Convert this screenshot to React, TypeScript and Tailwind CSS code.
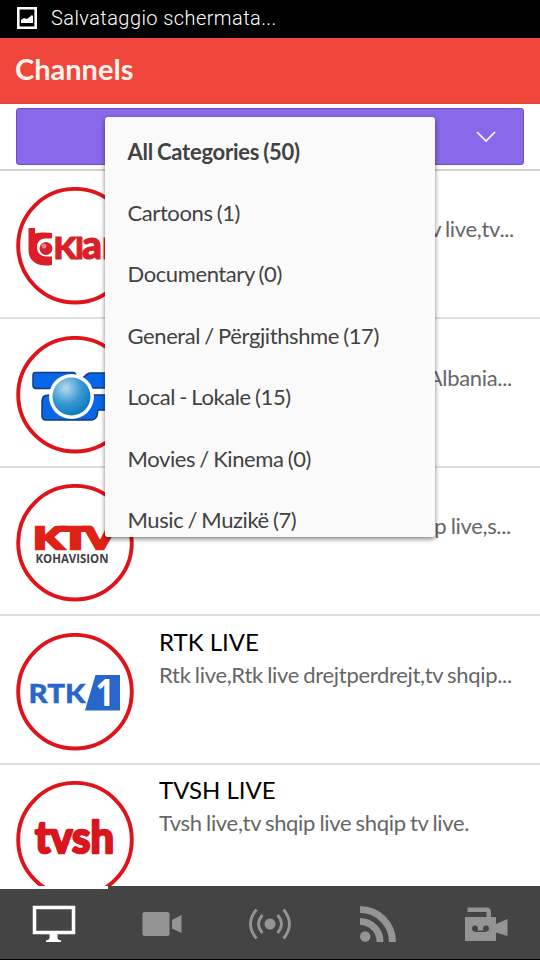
import React from "react";

const lato = "font-['Lato','Liberation_Sans',sans-serif]";

function Ring({ children }: { children: React.ReactNode }) {
  return (
    <svg className="ml-4 mt-[16.5px] h-[118px] w-[118px] shrink-0" viewBox="0 0 118 118">
      <circle cx="59" cy="58.700" r="56.8" fill="#fff" stroke="#df141b" strokeWidth="3.9" />
      {children}
    </svg>
  );
}

function KlanLogo() {
  return (
    <Ring>
      <path d="M12.500 41h6.500v5.500c6-1.500 11-1.300 17-.5v5.500h-7c-5 0-8 4-8 8.500 0 6 4 9.500 9 9.500h6V78c-6 1-13 1-18-3-4-3-5.500-7-5.500-13Z" fill="#da1f28" />
      <circle cx="30" cy="61.500" r="6.500" fill="#d4232c" />
      <circle cx="28" cy="59" r="2.500" fill="#ea7f83" />
      <g fill="#da1f28" stroke="#da1f28" strokeWidth="1.200" fontWeight="900" className={lato}>
        <text x="37.500" y="72" fontSize="30" textLength="23" lengthAdjust="spacingAndGlyphs">K</text>
        <text x="59" y="72" fontSize="30" textLength="9" lengthAdjust="spacingAndGlyphs">I</text>
        <text x="66" y="72" fontSize="40" textLength="42" lengthAdjust="spacingAndGlyphs">an</text>
      </g>
    </Ring>
  );
}

function GlobeLogo() {
  return (
    <Ring>
      <g fill="#0867e8" stroke="#153b73" strokeWidth="1.500" strokeLinejoin="round">
        <path d="M19 36.500h38q3 0 3 4l-14 2q-8 2-10 10H20q-3 0-3-3V39.500q0-3 2-3Z" />
        <path d="M67 42q4-5 8-5h26v15H74q-2-5-7-10Z" />
        <path d="M27 61q2-2 7-2l3 9q5 10 16 13l8-1q11-4 15-14l1-7h24v10q0 5-5 5H82l-1 6q-2 4-6 4H30q-4 0-4-4V65Z" />
      </g>
      <circle cx="55.500" cy="60.500" r="22.500" fill="#fff" />
      <circle cx="55.500" cy="60.500" r="19" fill="url(#globe)" />
      <defs>
        <radialGradient id="globe" cx=".35" cy=".28" r=".8">
          <stop offset="0" stopColor="#b8d9ee" />
          <stop offset=".5" stopColor="#3b9bd3" />
          <stop offset="1" stopColor="#0873b9" />
        </radialGradient>
      </defs>
    </Ring>
  );
}

function KtvLogo() {
  return (
    <Ring>
      <g fontSize="31" fontWeight="900" fill="#df2218" stroke="#df2218" strokeWidth="2.600" className={lato}>
        <text x="17.500" y="65" textLength="30" lengthAdjust="spacingAndGlyphs">K</text>
        <text x="45" y="65" textLength="29" lengthAdjust="spacingAndGlyphs">T</text>
        <text x="69" y="65" textLength="30" lengthAdjust="spacingAndGlyphs">V</text>
      </g>
      <text x="19.500" y="79" fontSize="12" fontWeight="700" textLength="73" lengthAdjust="spacingAndGlyphs" fill="#424047" className="font-['Open_Sans','Liberation_Sans',sans-serif]">KOHAVISION</text>
    </Ring>
  );
}

function RtkLogo() {
  return (
    <Ring>
      <text x="12.500" y="69.500" fontSize="27" fontWeight="900" textLength="57" lengthAdjust="spacingAndGlyphs" fill="#2866ca" stroke="#2866ca" strokeWidth=".4" className={lato}>RTK</text>
      <path d="M79.500 42H104v35.500H69Z" fill="#2866ca" />
      <text x="79.500" y="73" fontSize="37" fontWeight="700" textLength="19" lengthAdjust="spacingAndGlyphs" fill="#fff" className="font-['Open_Sans','Liberation_Sans',sans-serif]">1</text>
    </Ring>
  );
}

function TvshLogo() {
  return (
    <Ring>
      <text x="19" y="72" fontSize="43" fontWeight="700" textLength="79" lengthAdjust="spacingAndGlyphs" fill="#d9161d" stroke="#d9161d" strokeWidth="2.600" strokeLinejoin="round" className={lato}>tvsh</text>
    </Ring>
  );
}

type Channel = { id: string; title?: string; text: string; logo: React.ReactNode; style?: string };

const channels: Channel[] = [
  { id: "klan", text: "v live,tv...", logo: <KlanLogo />, style: "mr-[26px] justify-end" },
  { id: "top", text: "Albania...", logo: <GlobeLogo />, style: "mr-[28px] justify-end" },
  { id: "ktv", text: "ip live,s...", logo: <KtvLogo />, style: "mr-[29px] justify-end" },
  { id: "rtk", title: "RTK LIVE", text: "Rtk live,Rtk live drejtperdrejt,tv shqip...", logo: <RtkLogo /> },
  { id: "tvsh", title: "TVSH LIVE", text: "Tvsh live,tv shqip live shqip tv live.", logo: <TvshLogo /> },
];

const categories = [
  "All Categories (50)",
  "Cartoons (1)",
  "Documentary (0)",
  "General / Përgjithshme (17)",
  "Local - Lokale (15)",
  "Movies / Kinema (0)",
  "Music / Muzikë (7)",
];

function TabBar() {
  return (
    <nav className="relative grid h-[74px] shrink-0 grid-cols-5 border-b border-black bg-[#444444] text-[#949494]">
      <div className="absolute left-0 top-0 h-[3px] w-[108px] bg-white" />
      <svg viewBox="0 0 108 74" className="h-[74px] w-[108px]">
        <path d="M34.500 21.500h39v25h-39Z" fill="none" stroke="#fff" strokeWidth="3.500" />
        <path d="M49.500 48h8v4q0 1.500 3.500 2.500V56H46v-1.500q3.500-1 3.500-2.500Z" fill="#fff" />
      </svg>
      <svg viewBox="0 0 108 74" className="h-[74px] w-[108px]" fill="currentColor">
        <rect x="34.500" y="26" width="27" height="24" rx="2" />
        <path d="m64 34 9.500-5v18L64 42.500Z" />
      </svg>
      <svg viewBox="0 0 108 74" className="h-[74px] w-[108px]" fill="none" stroke="currentColor" strokeWidth="2.800">
        <circle cx="54" cy="38" r="5.500" fill="currentColor" stroke="none" />
        <path d="M46.500 29q-8 9 0 18M61.500 29q8 9 0 18M40.500 23.500q-12 14.500 0 29M67.500 23.500q12 14.500 0 29" />
      </svg>
      <svg viewBox="0 0 108 74" className="h-[74px] w-[108px]" fill="none" stroke="currentColor" strokeWidth="7">
        <circle cx="41.200" cy="50.500" r="5.200" fill="currentColor" stroke="none" />
        <path d="M36 35.500A20 20 0 0 1 56 56M36 23.500A32.500 32.500 0 0 1 68.500 56" />
      </svg>
      <svg viewBox="0 0 108 74" className="h-[74px] w-[108px]" fill="currentColor">
        <path d="M35.500 21.500H54q5 0 5 5V32h-4.500v-6h-19Z" />
        <path d="M33 31h31v7l11.500-5v17L64 46.500V55H33Z" />
        <g fill="#444444">
          <circle cx="43" cy="42.500" r="3" />
          <circle cx="54" cy="42.500" r="3" />
          <path d="M43 44.500h11v1.500H43Z" />
        </g>
      </svg>
    </nav>
  );
}

export default function App() {
  return (
    <div className={`relative flex h-[960px] w-[540px] flex-col overflow-hidden bg-white ${lato}`}>
      <div className="flex h-[37.500px] shrink-0 items-center bg-black pl-[17px] text-white">
        <svg viewBox="0 0 20 22" className="-mt-px h-[22px] w-5">
          <path d="M1.300 1.300h17.400v19.400H1.300Z" fill="none" stroke="currentColor" strokeWidth="2.600" />
          <path d="M4 16v-3l3-2 3 1 5-4 1 1v7Z" fill="currentColor" />
        </svg>
        <span className="ml-[14px] -mt-[2px] whitespace-nowrap font-['Roboto','Liberation_Sans',sans-serif] text-[20px] font-light tracking-[0.42px]">Salvataggio schermata...</span>
      </div>
      <header className="flex h-[66px] shrink-0 items-center border-b border-[#d84a38] bg-[#f1463b] pl-[15px]">
        <h1 className="-mt-[3px] text-[29px] font-bold text-[#fff3ec]">Channels</h1>
      </header>
      <div className="h-[67px] shrink-0 border-b-2 border-[#d4d1d1] pl-4 pt-[4.500px]">
        <div className="flex h-[57px] w-[508px] items-center justify-end rounded-[3px] border border-[#6d50c2] bg-[#8969e9] pr-[27px]">
          <svg viewBox="0 0 20 12" className="h-3 w-5" fill="none" stroke="#fff" strokeWidth="1.600">
            <path d="m1 1 9 9 9-9" />
          </svg>
        </div>
      </div>
      <main className="min-h-0 flex-1 overflow-hidden">
        {channels.map((c) => (
          <article key={c.id} className="flex h-[148.500px] border-b-2 border-[#dedede]">
            {c.logo}
            <div className="ml-[25px] min-w-0 flex-1 whitespace-nowrap pt-[9.500px]">
              <h2 className="h-8 text-[24px] leading-[32px] text-black">{c.title}</h2>
              <p className={`flex text-[22px] leading-[33px] tracking-[-0.32px] text-[#666] [word-spacing:-1px] ${c.style ?? ""}`}>{c.text}</p>
            </div>
          </article>
        ))}
      </main>
      <TabBar />
      <div className="absolute left-[105px] top-[117px] h-[420px] w-[330px] overflow-hidden rounded-[3px] bg-[#fafafa] shadow-[0_2px_5px_rgba(0,0,0,0.5)]">
        <ul className="pl-[22.500px] pt-[3px] text-[22px] text-[#424242] [word-spacing:-1px]">
          {categories.map((name, i) => (
            <li key={name} className={`flex h-[61.500px] items-center whitespace-nowrap ${i === 0 ? "pt-px font-bold tracking-[-0.25px]" : "tracking-[-0.4px]"}`}>{name}</li>
          ))}
        </ul>
      </div>
    </div>
  );
}
